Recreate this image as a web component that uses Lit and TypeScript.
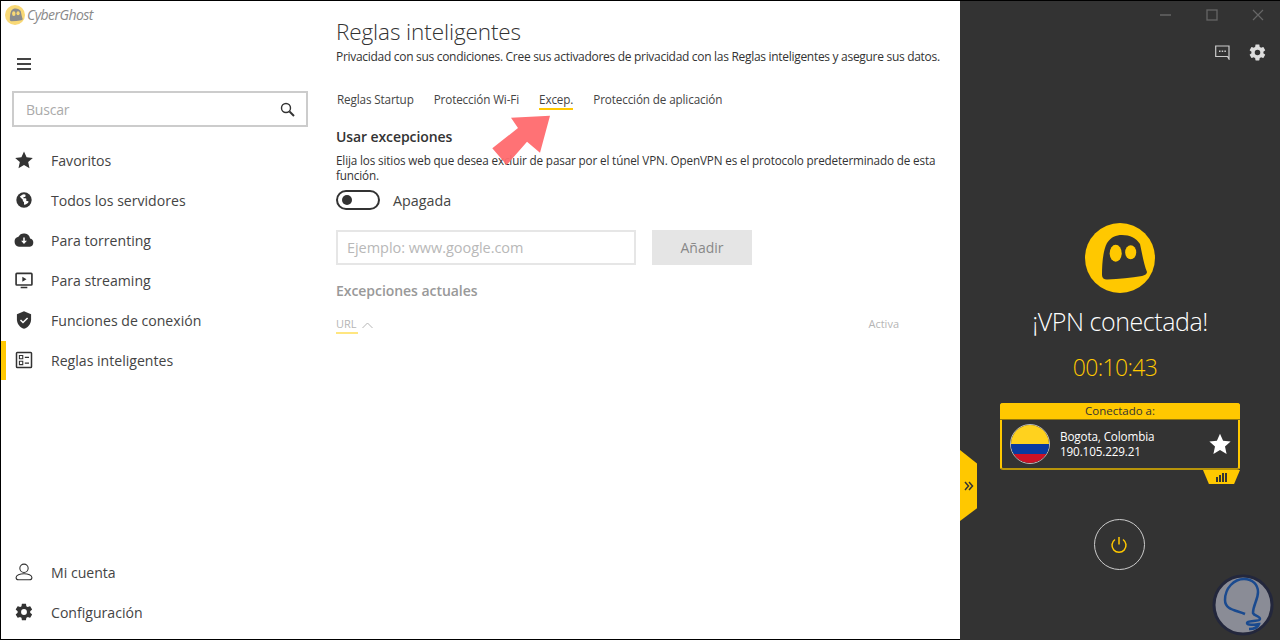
import { LitElement, html, css, svg } from 'lit';
import { customElement } from 'lit/decorators.js';

const icons: Record<string, unknown> = {
  star: svg`<path d="M12 1.8l3.100 6.900 7.500.8-5.600 5 1.600 7.400L12 18.100l-6.600 3.800L7 14.500l-5.600-5 7.500-.8z" fill="#333"/>`,
  globe: svg`<circle cx="12" cy="12" r="9.200" fill="#333"/><path d="M12 5c-2 .3-4 1.500-5 3.200l3.600 3.600v1c0 .8.7 1.400 1.400 1.400v3.600c2.600-.2 4.600-1.600 5.600-3.600-.4-.7-1-1-1.800-1h-1v-2.400c0-.6-.4-1-1-1h-2.400v-1.400h1.400c.6 0 1-.4 1-1V5.800z" fill="#fff"/>`,
  cloud: svg`<path d="M19.300 10.200A7.500 7.500 0 0 0 5.300 8.200 6 6 0 0 0 6 20h13a5 5 0 0 0 .3-9.800z" fill="#333"/><path d="M12.900 9v4h2.600L12 16.800 8.500 13h2.600V9z" fill="#fff"/>`,
  screen: svg`<rect x="2.500" y="4" width="19" height="14" rx="1" fill="none" stroke="#333" stroke-width="2"/><path d="M10 8l5 3-5 3zM8 20h8v1.800H8z" fill="#333"/>`,
  shield: svg`<path d="M12 1.500L3.500 5v6c0 5.300 3.600 10 8.500 11.500 4.900-1.500 8.500-6.200 8.500-11.500V5z" fill="#333"/><path d="M7.800 12l3 3 5.500-5.500" fill="none" stroke="#fff" stroke-width="1.800"/>`,
  rules: svg`<rect x="3" y="3" width="18" height="18" rx="1" fill="none" stroke="#333" stroke-width="1.800"/><path d="M6.500 6.500h4v4h-4zM6.500 13.500h4v4h-4z" fill="none" stroke="#333" stroke-width="1.300"/><path d="M13 8h5v1.500h-5zM13 15h5v1.500h-5z" fill="#333"/>`,
  user: svg`<circle cx="12" cy="7.500" r="5" fill="none" stroke="#333" stroke-width="1.300"/><path d="M12 14c-5 0-9.500 1.800-9.500 4.500 0 1.700 1.300 2.800 3 2.800h13c1.700 0 3-1.100 3-2.800C21.500 15.800 17 14 12 14z" fill="none" stroke="#333" stroke-width="1.300"/>`,
  gear: svg`<path fill-rule="evenodd" d="M19.400 13c.1-.3.1-.7.1-1s0-.7-.1-1l2.100-1.600c.2-.2.200-.4.100-.6l-2-3.500c-.1-.2-.4-.3-.6-.2l-2.500 1c-.5-.4-1.100-.7-1.700-1L14.400 2.500c0-.3-.2-.5-.5-.5h-4c-.2 0-.4.200-.5.400L9 5.100c-.6.300-1.200.6-1.700 1l-2.500-1c-.2-.1-.5 0-.6.2l-2 3.500c-.1.200-.1.400.1.600L4.400 11c0 .3-.1.700-.1 1s0 .7.1 1l-2.100 1.600c-.2.200-.2.400-.1.600l2 3.500c.1.200.4.300.6.200l2.500-1c.5.400 1.100.7 1.700 1l.4 2.700c0 .2.200.4.500.4h4c.2 0 .5-.2.500-.4l.4-2.700c.6-.3 1.200-.6 1.700-1l2.500 1c.2.100.5 0 .6-.2l2-3.500c.1-.2.100-.4-.1-.6zM12 15.500a3.500 3.500 0 1 1 0-7 3.500 3.500 0 0 1 0 7z"/>`,
};

const icon = (name: string, size = 20, fill = '#333') =>
  html`<svg width=${size} height=${size} viewBox="0 0 24 24" fill=${fill}>${icons[name]}</svg>`;

const ghost = (bg: string, body: string, size: number) => html`
  <svg width=${size} height=${size} viewBox="0 0 70 70">
    <circle cx="35" cy="35" r="35" fill=${bg}/>
    <path d="M17 52C17 40 18 28 22 20 26 14 31 12 37 12 45 12 51 15 55 21 57 30 59 42 62 49 62 51 60 52 57 53 46 55 34 56 22 56.500 19 56.500 17 55 17 52z" fill=${body}/>
    <ellipse cx="30.700" cy="30.300" rx="6" ry="8.500" fill=${bg}/>
    <ellipse cx="45.700" cy="29.300" rx="5.500" ry="7" fill=${bg}/>
  </svg>`;

@customElement('app-root')
export class AppRoot extends LitElement {
  static styles = css`
    :host {
      display: flex;
      position: relative;
      width: 1280px;
      height: 640px;
      overflow: hidden;
      box-sizing: border-box;
      background: #fff;
      color: #333;
      font-family: 'Open Sans', 'Liberation Sans', sans-serif;
    }
    .sidebar {
      width: 320px;
      box-sizing: border-box;
      border-left: 1px solid #000;
      border-top: 1px solid #000;
      border-bottom: 1px solid #000;
      display: flex;
      flex-direction: column;
    }
    .brand {
      display: flex;
      align-items: center;
      gap: 2px;
      padding: 4px 0 0 4px;
      height: 20px;
    }
    .brand-name {
      margin-top: -2px;
      font-size: 14px;
      font-style: italic;
      letter-spacing: -0.550px;
      color: #8a8a8a;
    }
    .burger {
      margin: 33px 0 0 16px;
      width: 14px;
      height: 12px;
      border-top: 2px solid #444;
      border-bottom: 2px solid #444;
      box-sizing: border-box;
      position: relative;
    }
    .burger::after {
      content: '';
      position: absolute;
      left: 0;
      right: 0;
      top: 3px;
      height: 2px;
      background: #444;
    }
    .search {
      margin: 21px 0 0 11px;
      width: 296px;
      height: 36px;
      box-sizing: border-box;
      border: 2px solid #ccc;
      display: flex;
      align-items: center;
      justify-content: space-between;
      padding: 0 11px 0 12px;
      font-size: 14px;
      color: #aaa;
      letter-spacing: -0.200px;
    }
    nav {
      margin-top: 13px;
    }
    .item {
      height: 40px;
      display: flex;
      align-items: center;
      position: relative;
      font-size: 14.100px;
      color: #444;
    }
    .item svg {
      margin-left: 13px;
      margin-right: 17px;
      flex: none;
    }
    .item.active::before {
      content: '';
      position: absolute;
      left: 0;
      top: 1px;
      bottom: 0;
      width: 5px;
      background: #ffc800;
    }
    .bottom {
      margin-top: auto;
      margin-bottom: 7px;
    }
    main {
      width: 640px;
      box-sizing: border-box;
      padding: 0 0 0 16px;
      border-top: 1px solid #000;
      border-bottom: 1px solid #000;
    }
    h1 {
      margin: 14px 0 0;
      font-size: 22.500px;
      line-height: 34px;
      font-weight: 300;
      letter-spacing: -0.100px;
      color: #333;
    }
    .lead {
      margin: 0;
      font-size: 12px;
      line-height: 16px;
      letter-spacing: -0.300px;
      white-space: nowrap;
    }
    .tabs {
      display: flex;
      margin: 26px 0 0 1px;
      gap: 20px;
      font-size: 11.700px;
      line-height: 16px;
      letter-spacing: -0.130px;
      color: #444;
    }
    .tab {
      padding-bottom: 1px;
      border-bottom: 2px solid transparent;
    }
    .tab.on {
      border-bottom-color: #ffc800;
    }
    h2 {
      margin: 17px 0 0;
      font-size: 14px;
      line-height: 20px;
      font-weight: 600;
      letter-spacing: -0.100px;
    }
    .desc {
      margin: 6px 0 0;
      width: 610px;
      font-size: 11.700px;
      line-height: 15px;
      letter-spacing: -0.140px;
    }
    .switch {
      display: flex;
      align-items: center;
      gap: 13px;
      margin-top: 7px;
      font-size: 14.300px;
      color: #444;
    }
    .track {
      width: 44px;
      height: 20px;
      box-sizing: border-box;
      border: 2px solid #333;
      border-radius: 10px;
      display: flex;
      align-items: center;
      padding-left: 4px;
    }
    .knob {
      width: 10px;
      height: 10px;
      border-radius: 50%;
      background: #333;
    }
    .add {
      display: flex;
      gap: 16px;
      margin-top: 20px;
    }
    .field {
      width: 300px;
      height: 35px;
      box-sizing: border-box;
      border: 2px solid #e6e6e6;
      display: flex;
      align-items: center;
      padding-left: 9px;
      font-size: 14.500px;
      letter-spacing: -0.050px;
      color: #b8b8b8;
    }
    .btn {
      width: 100px;
      height: 35px;
      background: #e5e5e5;
      color: #888;
      font-size: 14px;
      display: flex;
      align-items: center;
      justify-content: center;
    }
    h3 {
      margin: 16px 0 0;
      font-size: 14px;
      line-height: 20px;
      font-weight: 600;
      letter-spacing: -0.050px;
      color: #999;
    }
    .head {
      display: flex;
      justify-content: space-between;
      width: 563px;
      margin-top: 15px;
      font-size: 11px;
      line-height: 16px;
      color: #b5b5b5;
    }
    .sort {
      display: flex;
      align-items: center;
      gap: 4px;
    }
    .url {
      border-bottom: 2px solid #ffe680;
      width: 22px;
    }
    .panel {
      width: 320px;
      box-sizing: border-box;
      background: #333;
      border-top: 1px solid #000;
      display: flex;
      flex-direction: column;
      align-items: center;
      position: relative;
    }
    .winbar {
      align-self: stretch;
      display: flex;
      justify-content: flex-end;
      gap: 34px;
      padding: 8px 16px 0 0;
      height: 20px;
    }
    .tools {
      align-self: stretch;
      display: flex;
      justify-content: flex-end;
      align-items: center;
      gap: 18px;
      padding: 13px 13px 0 0;
      height: 20px;
    }
    .logo {
      margin-top: 161px;
      display: flex;
    }
    .status {
      margin-top: 10px;
      font-size: 25px;
      line-height: 36px;
      font-weight: 300;
      letter-spacing: -0.450px;
      color: #fff;
    }
    .timer {
      margin: 10px 10px 0 0;
      font-size: 23px;
      line-height: 36px;
      font-weight: 300;
      letter-spacing: -0.680px;
      color: #ffc800;
    }
    .card {
      margin-top: 18px;
      width: 240px;
      box-sizing: border-box;
      border: 2px solid #ffc800;
      border-top: 0;
      border-bottom-color: #b8940a;
      border-radius: 3px;
      position: relative;
      height: 67px;
    }
    .card-head {
      margin: 0 -2px;
      height: 16px;
      background: #ffc800;
      border-bottom: 1px solid #8f7510;
      border-radius: 3px 3px 0 0;
      text-align: center;
      font-size: 11.500px;
      line-height: 16px;
      color: #333;
    }
    .card-body {
      display: flex;
      align-items: center;
      height: 48px;
      padding: 0 6px 0 8px;
    }
    .flag {
      flex: none;
      width: 40px;
      height: 40px;
      border-radius: 50%;
      box-sizing: border-box;
      border: 1px solid #bbb;
      overflow: hidden;
      display: flex;
      flex-direction: column;
    }
    .flag i:nth-child(1) {
      flex: 2;
      background: #ffd21e;
    }
    .flag i:nth-child(2) {
      flex: 1;
      background: #0a3aa0;
    }
    .flag i:nth-child(3) {
      flex: 1;
      background: #ce1126;
    }
    .place {
      margin-left: 10px;
      flex: 1;
      font-size: 11.700px;
      line-height: 15px;
      letter-spacing: -0.130px;
      color: #fff;
    }
    .stats {
      position: absolute;
      right: -2px;
      bottom: -16px;
      width: 37px;
      height: 14px;
      background: #ffc800;
      clip-path: polygon(0 0, 100% 0, 84% 100%, 16% 100%);
      display: flex;
      align-items: flex-end;
      justify-content: center;
      gap: 1px;
      padding-bottom: 2px;
      box-sizing: border-box;
    }
    .stats i {
      width: 2px;
      background: #333;
    }
    .power {
      margin-top: 49px;
      margin-right: 2px;
      width: 51px;
      height: 51px;
      box-sizing: border-box;
      border: 1px solid #ccc;
      border-radius: 50%;
      display: flex;
      align-items: center;
      justify-content: center;
    }
    .handle {
      position: absolute;
      left: 0;
      top: 449px;
      width: 17px;
      height: 71px;
      background: #ffc800;
      clip-path: polygon(0 0, 100% 19%, 100% 82%, 0 100%);
      display: flex;
      align-items: center;
      justify-content: center;
    }
    .arrow {
      position: absolute;
      left: 490px;
      top: 112px;
      opacity: 0.95;
    }
    .mark {
      position: absolute;
      left: 1212px;
      top: 574px;
    }
  `;

  render() {
    const nav = [
      ['star', 'Favoritos'],
      ['globe', 'Todos los servidores'],
      ['cloud', 'Para torrenting'],
      ['screen', 'Para streaming'],
      ['shield', 'Funciones de conexión'],
      ['rules', 'Reglas inteligentes'],
    ];
    return html`
      <aside class="sidebar">
        <div class="brand">
          ${ghost('#f9d976', '#8c8c8c', 20)}
          <span class="brand-name">CyberGhost</span>
        </div>
        <div class="burger"></div>
        <div class="search">
          <span>Buscar</span>
          <svg width="15" height="15" viewBox="0 0 15 15" fill="none" stroke="#333">
            <circle cx="6" cy="6" r="4.500" stroke-width="1.400"/>
            <path d="M9.500 9.500L14 14" stroke-width="2"/>
          </svg>
        </div>
        <nav>
          ${nav.map(
            ([i, label]) => html`
              <div class="item ${label === 'Reglas inteligentes' ? 'active' : ''}">
                ${icon(i)}<span>${label}</span>
              </div>
            `,
          )}
        </nav>
        <div class="bottom">
          <div class="item">${icon('user')}<span>Mi cuenta</span></div>
          <div class="item">${icon('gear')}<span>Configuración</span></div>
        </div>
      </aside>

      <main>
        <h1>Reglas inteligentes</h1>
        <p class="lead">Privacidad con sus condiciones. Cree sus activadores de privacidad con las Reglas inteligentes y asegure sus datos.</p>
        <div class="tabs">
          <span class="tab">Reglas Startup</span>
          <span class="tab">Protección Wi-Fi</span>
          <span class="tab on">Excep.</span>
          <span class="tab">Protección de aplicación</span>
        </div>
        <h2>Usar excepciones</h2>
        <p class="desc">Elija los sitios web que desea excluir de pasar por el túnel VPN. OpenVPN es el protocolo predeterminado de esta función.</p>
        <div class="switch">
          <div class="track"><div class="knob"></div></div>
          <span>Apagada</span>
        </div>
        <div class="add">
          <div class="field">Ejemplo: www.google.com</div>
          <div class="btn">Añadir</div>
        </div>
        <h3>Excepciones actuales</h3>
        <div class="head">
          <div class="sort">
            <span class="url">URL</span>
            <svg width="11" height="7" viewBox="0 0 11 7" fill="none" stroke="#b5b5b5"><path d="M.5 6l5-5 5 5"/></svg>
          </div>
          <span>Activa</span>
        </div>
      </main>

      <section class="panel">
        <div class="winbar">
          <svg width="12" height="12" viewBox="0 0 12 12" stroke="#666" stroke-width="1.500"><path d="M0 6h11"/></svg>
          <svg width="12" height="12" viewBox="0 0 12 12" fill="none" stroke="#666" stroke-width="1.300"><rect x="1" y="1" width="10" height="10"/></svg>
          <svg width="12" height="12" viewBox="0 0 12 12" stroke="#666" stroke-width="1.200"><path d="M1 1l10 10M11 1L1 11"/></svg>
        </div>
        <div class="tools">
          <svg width="15" height="15" viewBox="0 0 15 15" fill="none" stroke="#ccc" stroke-width="1.200">
            <path d="M.7 1h13.300v13L12.500 11.500H.7z"/>
            <path d="M4 6.300h1.500M6.700 6.300h1.500M9.400 6.300h1.500" stroke-width="1.500"/>
          </svg>
          ${icon('gear', 19, '#ddd')}
        </div>
        <div class="logo">${ghost('#ffc800', '#333', 70)}</div>
        <div class="status">¡VPN conectada!</div>
        <div class="timer">00:10:43</div>
        <div class="card">
          <div class="card-head">Conectado a:</div>
          <div class="card-body">
            <div class="flag"><i></i><i></i><i></i></div>
            <div class="place">Bogota, Colombia<br />190.105.229.21</div>
            <svg width="24" height="24" viewBox="0 0 24 24"><path d="M12 1.800l3.100 6.900 7.500.8-5.600 5 1.600 7.400L12 18.100l-6.600 3.800L7 14.500l-5.600-5 7.500-.8z" fill="#fff"/></svg>
          </div>
          <div class="stats">
            <i style="height:5px"></i><i style="height:7px"></i><i style="height:9px"></i><i style="height:9px"></i>
          </div>
        </div>
        <div class="power">
          <svg width="18" height="18" viewBox="0 0 18 18" fill="none" stroke="#ffc800" stroke-width="1.500">
            <path d="M9 1v7.500M5 3.500a7 7 0 1 0 8 0"/>
          </svg>
        </div>
        <div class="handle">
          <svg width="10" height="10" viewBox="0 0 10 10" fill="none" stroke="#333" stroke-width="1.500"><path d="M1 1l3.500 4L1 9M5 1l3.500 4L5 9"/></svg>
        </div>
      </section>

      <svg class="arrow" width="62" height="56" viewBox="0 0 62 56">
        <path d="M60 3.700L50 40.700 37 29.700 16.700 53 2.300 36.300 28 16 21 5.700z" fill="#ff6b6e"/>
      </svg>
      <svg class="mark" width="62" height="62" viewBox="0 0 62 62">
        <circle cx="31" cy="31" r="29" fill="#8a8c96" stroke="#23273c" stroke-width="3"/>
        <path d="M33 40C24 36 13 36 13 26 13 14 22 5 32 5 41 5 46 11 46 18 46 26 41 31 41 39 42 42 48 42 48 45 48 48 35 46 35 49 35 52 46 50 47 50 46 53 42 55 37 55" fill="none" stroke="#1a4a8f" stroke-width="2.500"/>
      </svg>
    `;
  }
}
